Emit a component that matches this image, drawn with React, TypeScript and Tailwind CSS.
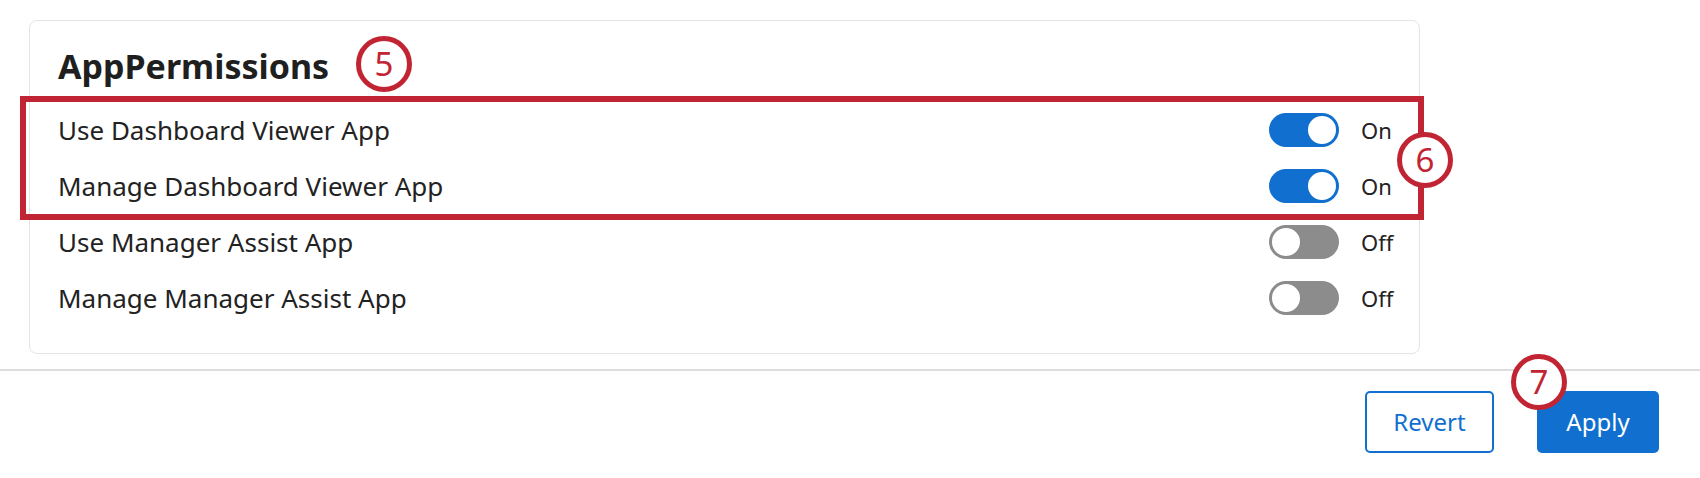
import React from "react";

const font = { fontFamily: '"Noto Sans", "Open Sans", sans-serif' };

function Toggle({ on }: { on: boolean }) {
  return (
    <div
      className={
        "w-[70px] h-[34px] rounded-full flex items-center px-[1px] " +
        (on ? "bg-[#1170cf] justify-end" : "bg-[#8c8c8c] justify-start")
      }
    >
      <div
        className={
          "w-[32px] h-[32px] rounded-full bg-white border-[2px] " +
          (on ? "border-[#1170cf]" : "border-[#8c8c8c]")
        }
      />
    </div>
  );
}

function Row({ label, on }: { label: string; on: boolean }) {
  return (
    <div className="h-[56px] flex items-center">
      <div className="flex-1 text-[26px] text-[#222222]">{label}</div>
      <Toggle on={on} />
      <div className="w-[80px] pl-[22px] text-[22px] text-[#222222]">{on ? "On" : "Off"}</div>
    </div>
  );
}

function Badge({ n, className }: { n: string; className: string }) {
  return (
    <div
      className={
        "absolute w-[56px] h-[56px] rounded-full border-[5px] border-[#c12533] bg-white flex items-center justify-center text-[33px] leading-none text-[#c12533] " +
        className
      }
    >
      <span className="-mt-[2px]">{n}</span>
    </div>
  );
}

export default function App() {
  return (
    <div className="relative w-[1700px] h-[478px] bg-white overflow-hidden" style={font}>
      <div className="pt-[20px] pl-[29px]">
        <div className="w-[1391px] h-[334px] border border-[#e4e4e4] rounded-[8px] pl-[28px]">
          <div className="h-[81px] flex items-center pt-[10px]">
            <h2 className="text-[34px] font-bold text-[#1f1f1f]">AppPermissions</h2>
          </div>
          <Row label="Use Dashboard Viewer App" on={true} />
          <Row label="Manage Dashboard Viewer App" on={true} />
          <Row label="Use Manager Assist App" on={false} />
          <Row label="Manage Manager Assist App" on={false} />
        </div>
      </div>
      <div className="mt-[15px] h-[2px] bg-[#dddddd]" />
      <div className="flex justify-end gap-[43px] pr-[41px] pt-[20px]">
        <button className="w-[129px] h-[62px] rounded-[5px] border-[2px] border-[#1170cf] text-[#1170cf] text-[24px] bg-white">
          Revert
        </button>
        <button className="w-[122px] h-[62px] rounded-[5px] bg-[#1170cf] text-white text-[24px]">
          Apply
        </button>
      </div>

      <div className="absolute left-[20px] top-[96px] w-[1404px] h-[124px] border-[6px] border-[#c12533]" />
      <Badge n="5" className="left-[356px] top-[36px]" />
      <Badge n="6" className="left-[1397px] top-[132px]" />
      <Badge n="7" className="left-[1511px] top-[354px]" />
    </div>
  );
}
